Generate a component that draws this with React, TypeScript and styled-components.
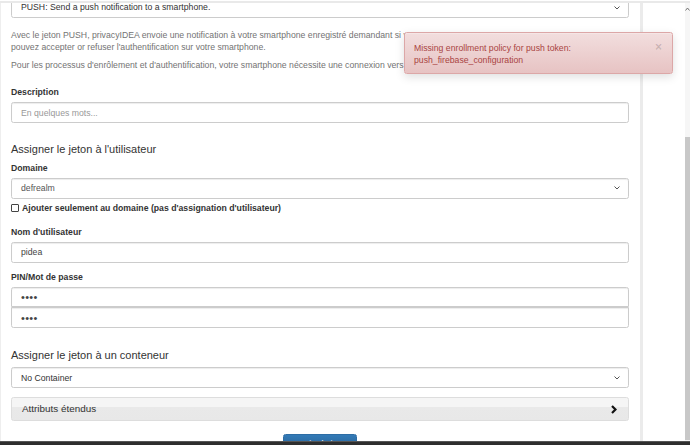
import React from 'react';
import styled, { createGlobalStyle } from 'styled-components';

const GlobalStyle = createGlobalStyle`
  html, body {
    margin: 0;
    padding: 0;
    background: #fff;
  }
  body {
    font-family: "Liberation Sans", Arial, sans-serif;
    color: #333;
  }
  * {
    box-sizing: border-box;
  }
`;

const Screen = styled.div`
  position: relative;
  width: 690px;
  height: 445px;
  display: flex;
  flex-direction: column;
  overflow: hidden;
  background: #fff;
`;

const TopEdge = styled.div`
  height: 3px;
  border-top: 1px solid #fff;
  background: #e9e9e9;
  flex: none;
`;

const Viewport = styled.div`
  flex: 1;
  display: flex;
  min-height: 0;
  overflow: hidden;
`;

const MainColumn = styled.div`
  width: 643px;
  flex: none;
  padding: 0 11px 0 10px;
  border-left: 1px solid #eee;
  border-right: 3px solid #ebebeb;
  font-size: 8.7px;
  line-height: 12.4px;
`;

const Gutter = styled.div`
  flex: 1;
`;

const ScrollTrack = styled.div`
  width: 5px;
  flex: none;
  display: flex;
  flex-direction: column;
  background: #f6f6f6;
`;

const ScrollArrow = styled.div`
  height: 8px;
  display: flex;
  justify-content: center;
  align-items: flex-end;
  margin-bottom: 126px;
`;

const ScrollThumb = styled.div`
  height: 303px;
  background: #c8c8c8;
`;

const BottomBar = styled.div`
  height: 4px;
  flex: none;
  background: #2e2e2e;
  border-top: 1px solid #555;
`;

const FieldBox = styled.div<{ $h?: number; $mt?: number; $dark?: boolean }>`
  height: ${p => p.$h ?? 21}px;
  margin-top: ${p => p.$mt ?? 0}px;
  display: flex;
  align-items: center;
  justify-content: space-between;
  padding: 0 8px 0 9px;
  border: 1px solid #ccc;
  border-radius: 2.5px;
  box-shadow: inset 0 1px 1px rgba(0, 0, 0, 0.075);
  background: #fff;
  color: ${p => (p.$dark ? '#333' : '#555')};
  font-size: 8.7px;
`;

const TextInput = styled.input<{ $h?: number; $secret?: boolean }>`
  display: block;
  width: 100%;
  height: ${p => p.$h ?? 21}px;
  margin: 0;
  padding: 0 9px;
  border: 1px solid #ccc;
  border-radius: 2.5px;
  box-shadow: inset 0 1px 1px rgba(0, 0, 0, 0.075);
  font-family: "Liberation Sans", Arial, sans-serif;
  font-size: ${p => (p.$secret ? '11px' : '8.7px')};
  letter-spacing: ${p => (p.$secret ? '0.3px' : 'normal')};
  color: #444;
  background: #fff;
  outline: none;

  &::placeholder {
    color: #999;
  }
`;

const PasswordGroup = styled.div`
  display: flex;
  flex-direction: column;

  & > input:first-child {
    border-radius: 2.5px 2.5px 0 0;
  }
  & > input:last-child {
    border-radius: 0 0 2.5px 2.5px;
  }
`;

const HelpText = styled.p<{ $mt: number }>`
  margin: ${p => p.$mt}px 0 0;
  color: #737373;
  white-space: nowrap;
`;

const Label = styled.div<{ $mt: number }>`
  margin-top: ${p => p.$mt}px;
  margin-bottom: 3.6px;
  font-weight: bold;
  color: #333;
`;

const Heading = styled.h4<{ $mt: number }>`
  margin: ${p => p.$mt}px 0 0;
  font-size: 11px;
  line-height: 12.1px;
  font-weight: normal;
  color: #333;
`;

const CheckRow = styled.label`
  display: flex;
  align-items: center;
  gap: 3px;
  margin-top: 3px;
  font-weight: bold;
  color: #333;
`;

const CheckSquare = styled.span`
  width: 8px;
  height: 8px;
  border: 1px solid #444;
  border-radius: 1px;
  background: #fff;
  flex: none;
`;

const CollapsePanel = styled.div`
  height: 24px;
  margin-top: 9.5px;
  display: flex;
  align-items: center;
  justify-content: space-between;
  padding: 0 11px 0 10px;
  border: 1px solid #ddd;
  border-radius: 2.5px;
  background: linear-gradient(to bottom, #f5f5f5 0%, #f5f5f5 40%, #e9e9e9 41%, #e8e8e8 100%);
  font-size: 9.9px;
  color: #333;
`;

const ButtonRow = styled.div`
  display: flex;
  justify-content: center;
  margin-top: 12.5px;
`;

const PrimaryButton = styled.button`
  width: 74px;
  height: 21px;
  padding: 0;
  border: 1px solid #2e6da4;
  border-radius: 2.5px;
  background: linear-gradient(to bottom, #337ab7 0%, #265a88 100%);
  color: #fff;
  font-family: "Liberation Sans", Arial, sans-serif;
  font-size: 8.7px;
  line-height: 19px;
`;

const Alert = styled.div`
  position: absolute;
  left: 404px;
  top: 32px;
  width: 269px;
  height: 42px;
  padding: 9px 9px 0 9px;
  border: 1px solid #dca7a7;
  border-radius: 2.5px;
  background: linear-gradient(to bottom, #f2dede 0%, #e7c3c3 100%);
  box-shadow: 0 3px 10px rgba(0, 0, 0, 0.13), inset 0 1px 0 rgba(255, 255, 255, 0.25);
  color: #a94442;
  font-size: 8.7px;
  line-height: 12.4px;
  display: flex;
  justify-content: space-between;
`;

const AlertClose = styled.span`
  font-size: 12px;
  line-height: 10px;
  font-weight: bold;
  color: rgba(0, 0, 0, 0.16);
  margin-right: 1px;
`;

const ChevronDown = () => (
  <svg width="6" height="4" viewBox="0 0 6 4">
    <polyline points="0.5,0.5 3,3 5.5,0.5" fill="none" stroke="#555" strokeWidth="1" />
  </svg>
);

const ChevronRight = () => (
  <svg width="6" height="9" viewBox="0 0 6 9">
    <polyline points="1,1 4.5,4.5 1,8" fill="none" stroke="#111" strokeWidth="2.2" />
  </svg>
);

const ArrowUp = () => (
  <svg width="5" height="4" viewBox="0 0 5 4">
    <polyline points="0.5,3.5 2.5,1 4.5,3.5" fill="none" stroke="#666" strokeWidth="0.9" />
  </svg>
);

const App: React.FC = () => {
  return (
    <>
      <GlobalStyle />
      <Screen>
        <TopEdge />
        <Viewport>
          <MainColumn>
            <FieldBox $mt={-6} $dark>
              <span>PUSH: Send a push notification to a smartphone.</span>
              <ChevronDown />
            </FieldBox>
            <HelpText $mt={11}>
              Avec le jeton PUSH, privacyIDEA envoie une notification à votre smartphone enregistré demandant si vous
              <br />
              pouvez accepter or refuser l'authentification sur votre smartphone.
            </HelpText>
            <HelpText $mt={5.2}>
              Pour les processus d'enrôlement et d'authentification, votre smartphone nécessite une connexion vers le serveur privacyIDEA.
            </HelpText>

            <Label $mt={14.6}>Description</Label>
            <TextInput placeholder="En quelques mots..." readOnly />

            <Heading $mt={20}>Assigner le jeton à l'utilisateur</Heading>
            <Label $mt={6.9}>Domaine</Label>
            <FieldBox>
              <span>defrealm</span>
              <ChevronDown />
            </FieldBox>
            <CheckRow>
              <CheckSquare />
              Ajouter seulement au domaine (pas d'assignation d'utilisateur)
            </CheckRow>

            <Label $mt={11.6}>Nom d'utilisateur</Label>
            <TextInput defaultValue="pidea" readOnly />

            <Label $mt={8}>PIN/Mot de passe</Label>
            <PasswordGroup>
              <TextInput type="password" defaultValue="1234" $h={20.5} $secret readOnly />
              <TextInput type="password" defaultValue="1234" $h={20.5} $secret readOnly />
            </PasswordGroup>

            <Heading $mt={21}>Assigner le jeton à un conteneur</Heading>
            <FieldBox $h={20.5} $mt={6.4} $dark>
              <span>No Container</span>
              <ChevronDown />
            </FieldBox>

            <CollapsePanel>
              <span>Attributs étendus</span>
              <ChevronRight />
            </CollapsePanel>

            <ButtonRow>
              <PrimaryButton>Inscrire le jeton</PrimaryButton>
            </ButtonRow>
          </MainColumn>
          <Gutter />
          <ScrollTrack>
            <ScrollArrow>
              <ArrowUp />
            </ScrollArrow>
            <ScrollThumb />
          </ScrollTrack>
        </Viewport>
        <BottomBar />
        <Alert>
          <span>
            Missing enrollment policy for push token:
            <br />
            push_firebase_configuration
          </span>
          <AlertClose>×</AlertClose>
        </Alert>
      </Screen>
    </>
  );
};

export default App;
